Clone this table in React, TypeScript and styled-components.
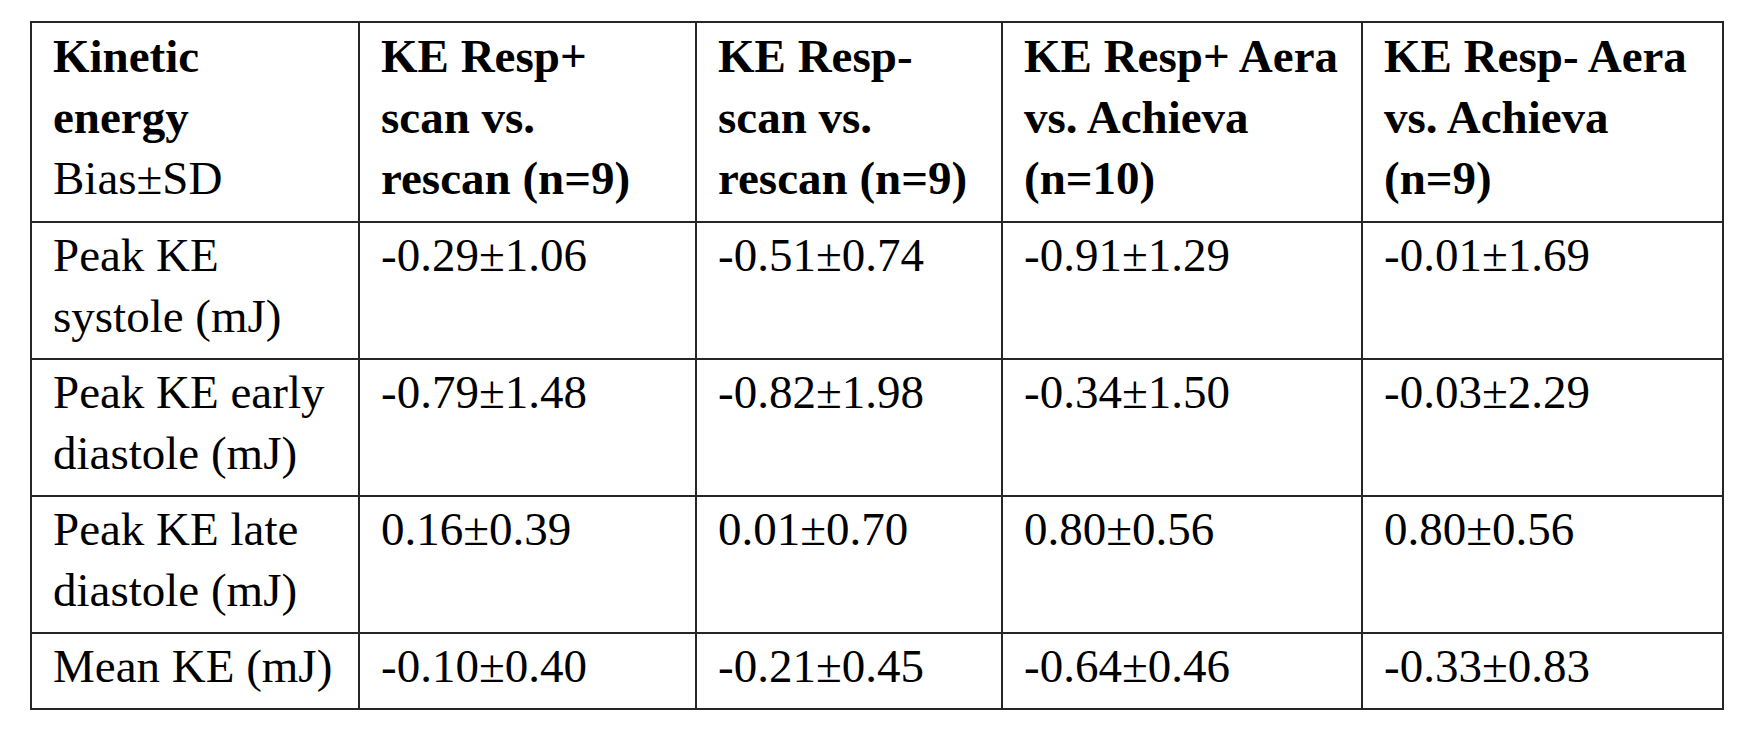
import React from "react";
import styled, { createGlobalStyle } from "styled-components";

const GlobalStyle = createGlobalStyle`
  html, body {
    margin: 0;
    padding: 0;
    background: #ffffff;
  }
  body {
    font-family: "Liberation Serif", "Times New Roman", serif;
    color: #000000;
  }
`;

const Page = styled.div`
  padding: 21px 0 0 30px;
  width: 1752px;
  height: 743px;
  box-sizing: border-box;
  background: #ffffff;
`;

const Table = styled.table`
  border-collapse: collapse;
  table-layout: fixed;
  width: 1694px;
  border: 2px solid #262626;
  font-family: "Liberation Serif", "Times New Roman", serif;
  font-size: 47px;
  line-height: 61px;
  color: #000000;
`;

const HeadCell = styled.th`
  border: 2px solid #262626;
  padding: 3px 6px 12px 21px;
  text-align: left;
  vertical-align: top;
  font-weight: 700;
`;

const Cell = styled.td`
  border: 2px solid #262626;
  padding: 2px 6px 11px 21px;
  text-align: left;
  vertical-align: top;
  font-weight: 400;
`;

const Line = styled.span<{ $light?: boolean }>`
  display: block;
  white-space: nowrap;
  font-weight: ${(p) => (p.$light ? 400 : "inherit")};
`;

const widths = [328, 337, 306, 360, 361];

const header: { text: string; light?: boolean }[][] = [
  [{ text: "Kinetic" }, { text: "energy" }, { text: "Bias±SD", light: true }],
  [{ text: "KE Resp+" }, { text: "scan vs." }, { text: "rescan (n=9)" }],
  [{ text: "KE Resp-" }, { text: "scan vs." }, { text: "rescan (n=9)" }],
  [{ text: "KE Resp+ Aera" }, { text: "vs. Achieva" }, { text: "(n=10)" }],
  [{ text: "KE Resp- Aera" }, { text: "vs. Achieva" }, { text: "(n=9)" }],
];

const rows: string[][][] = [
  [["Peak KE", "systole (mJ)"], ["-0.29±1.06"], ["-0.51±0.74"], ["-0.91±1.29"], ["-0.01±1.69"]],
  [["Peak KE early", "diastole (mJ)"], ["-0.79±1.48"], ["-0.82±1.98"], ["-0.34±1.50"], ["-0.03±2.29"]],
  [["Peak KE late", "diastole (mJ)"], ["0.16±0.39"], ["0.01±0.70"], ["0.80±0.56"], ["0.80±0.56"]],
  [["Mean KE (mJ)"], ["-0.10±0.40"], ["-0.21±0.45"], ["-0.64±0.46"], ["-0.33±0.83"]],
];

export default function App() {
  return (
    <>
      <GlobalStyle />
      <Page>
        <Table>
          <colgroup>
            {widths.map((w, i) => (
              <col key={i} style={{ width: w }} />
            ))}
          </colgroup>
          <thead>
            <tr>
              {header.map((lines, i) => (
                <HeadCell key={i}>
                  {lines.map((l, j) => (
                    <Line key={j} $light={l.light}>
                      {l.text}
                    </Line>
                  ))}
                </HeadCell>
              ))}
            </tr>
          </thead>
          <tbody>
            {rows.map((row, r) => (
              <tr key={r}>
                {row.map((lines, c) => (
                  <Cell key={c}>
                    {lines.map((l, j) => (
                      <Line key={j}>{l}</Line>
                    ))}
                  </Cell>
                ))}
              </tr>
            ))}
          </tbody>
        </Table>
      </Page>
    </>
  );
}
